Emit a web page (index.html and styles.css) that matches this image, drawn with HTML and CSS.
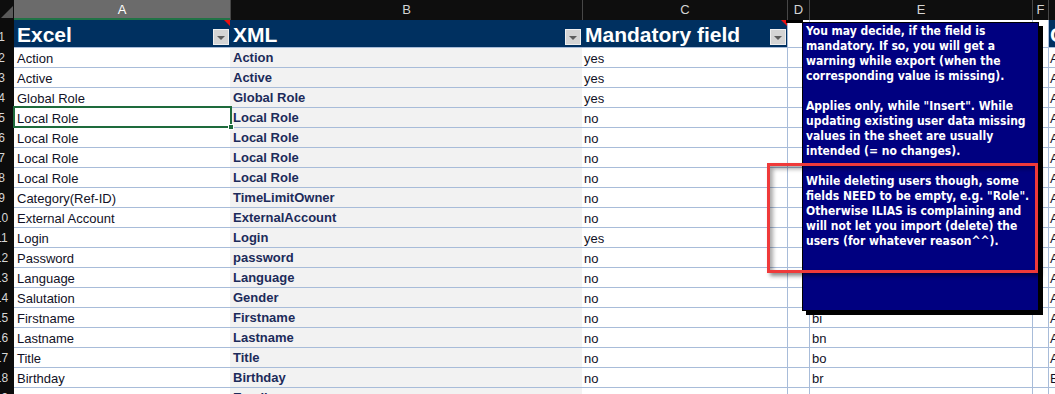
FILE: index.html
```html
<!DOCTYPE html>
<html>
<head>
<meta charset="utf-8">
<link rel="stylesheet" href="styles.css">
</head>
<body>
<div class="sheet">
  <div class="row colhead">
    <div class="corner"><svg width="14" height="20" viewBox="0 0 14 20"><polygon points="1,18 13,18 13,6" fill="#5a5a5a"/></svg></div>
    <div class="ch sel">A</div><div class="ch">B</div><div class="ch">C</div><div class="ch">D</div><div class="ch">E</div><div class="ch">F</div><div class="ch"></div>
  </div>
  <div class="row r1">
    <div class="rh"><span>1</span></div>
    <div class="c hd note"><span>Excel</span><i class="dd"></i></div>
    <div class="c hd"><span>XML</span><i class="dd"></i></div>
    <div class="c hd note"><span>Mandatory field</span><i class="dd"></i></div>
    <div class="c d"></div><div class="c e"></div><div class="c f"></div>
    <div class="c g hd"><span>C</span></div>
  </div>
  <div class="row"><div class="rh"><span>2</span></div><div class="c">Action</div><div class="c b">Action</div><div class="c cc">yes</div><div class="c d"></div><div class="c e"></div><div class="c f"></div><div class="c g">A</div></div>
  <div class="row"><div class="rh"><span>3</span></div><div class="c">Active</div><div class="c b">Active</div><div class="c cc">yes</div><div class="c d"></div><div class="c e"></div><div class="c f"></div><div class="c g">A</div></div>
  <div class="row"><div class="rh"><span>4</span></div><div class="c">Global Role</div><div class="c b">Global Role</div><div class="c cc">yes</div><div class="c d"></div><div class="c e"></div><div class="c f"></div><div class="c g">A</div></div>
  <div class="row"><div class="rh"><span>5</span></div><div class="c">Local Role</div><div class="c b">Local Role</div><div class="c cc">no</div><div class="c d"></div><div class="c e"></div><div class="c f"></div><div class="c g">A</div></div>
  <div class="row"><div class="rh"><span>6</span></div><div class="c">Local Role</div><div class="c b">Local Role</div><div class="c cc">no</div><div class="c d"></div><div class="c e"></div><div class="c f"></div><div class="c g">A</div></div>
  <div class="row"><div class="rh"><span>7</span></div><div class="c">Local Role</div><div class="c b">Local Role</div><div class="c cc">no</div><div class="c d"></div><div class="c e"></div><div class="c f"></div><div class="c g">A</div></div>
  <div class="row"><div class="rh"><span>8</span></div><div class="c">Local Role</div><div class="c b">Local Role</div><div class="c cc">no</div><div class="c d"></div><div class="c e"></div><div class="c f"></div><div class="c g">A</div></div>
  <div class="row"><div class="rh"><span>9</span></div><div class="c">Category(Ref-ID)</div><div class="c b">TimeLimitOwner</div><div class="c cc">no</div><div class="c d"></div><div class="c e"></div><div class="c f"></div><div class="c g">A</div></div>
  <div class="row"><div class="rh"><span>10</span></div><div class="c">External Account</div><div class="c b">ExternalAccount</div><div class="c cc">no</div><div class="c d"></div><div class="c e"></div><div class="c f"></div><div class="c g">A</div></div>
  <div class="row"><div class="rh"><span>11</span></div><div class="c">Login</div><div class="c b">Login</div><div class="c cc">yes</div><div class="c d"></div><div class="c e"></div><div class="c f"></div><div class="c g">A</div></div>
  <div class="row"><div class="rh"><span>12</span></div><div class="c">Password</div><div class="c b">password</div><div class="c cc">no</div><div class="c d"></div><div class="c e"></div><div class="c f"></div><div class="c g">A</div></div>
  <div class="row"><div class="rh"><span>13</span></div><div class="c">Language</div><div class="c b">Language</div><div class="c cc">no</div><div class="c d"></div><div class="c e"></div><div class="c f"></div><div class="c g">A</div></div>
  <div class="row"><div class="rh"><span>14</span></div><div class="c">Salutation</div><div class="c b">Gender</div><div class="c cc">no</div><div class="c d"></div><div class="c e"></div><div class="c f"></div><div class="c g">A</div></div>
  <div class="row"><div class="rh"><span>15</span></div><div class="c">Firstname</div><div class="c b">Firstname</div><div class="c cc">no</div><div class="c d"></div><div class="c e">bi</div><div class="c f"></div><div class="c g">A</div></div>
  <div class="row"><div class="rh"><span>16</span></div><div class="c">Lastname</div><div class="c b">Lastname</div><div class="c cc">no</div><div class="c d"></div><div class="c e">bn</div><div class="c f"></div><div class="c g">A</div></div>
  <div class="row"><div class="rh"><span>17</span></div><div class="c">Title</div><div class="c b">Title</div><div class="c cc">no</div><div class="c d"></div><div class="c e">bo</div><div class="c f"></div><div class="c g">A</div></div>
  <div class="row"><div class="rh"><span>18</span></div><div class="c">Birthday</div><div class="c b">Birthday</div><div class="c cc">no</div><div class="c d"></div><div class="c e">br</div><div class="c f"></div><div class="c g">B</div></div>
  <div class="row"><div class="rh"><span>19</span></div><div class="c">Email</div><div class="c b">Email</div><div class="c cc">no</div><div class="c d"></div><div class="c e">bs</div><div class="c f"></div><div class="c g">T</div></div>

  <div class="selection"><i class="handle"></i></div>
  <div class="connector"></div>
  <div class="comment">You may decide, if the field is<br>mandatory. If so, you will get a<br>warning while export (when the<br>corresponding value is missing).<br><br>Applies only, while "Insert". While<br>updating existing user data missing<br>values in the sheet are usually<br>intended (= no changes).<br><br>While deleting users though, some<br>fields NEED to be empty, e.g. "Role".<br>Otherwise ILIAS is complaining and<br>will not let you import (delete) the<br>users (for whatever reason^^).</div>
  <div class="mark"></div>
</div>
</body>
</html>
```
FILE: styles.css
```css
* { box-sizing: border-box; }
html, body { margin: 0; background: #fff; overflow: hidden; }
body { font-family: "Liberation Sans", Arial, sans-serif; font-size: 13px; }

.sheet { position: relative; width: 1055px; height: 394px; overflow: hidden; }

.row {
  display: grid;
  grid-template-columns: 14px 216px 352px 205px 22px 223px 16px 1fr;
  height: 20px;
}

.colhead { background: #0e0e0e; }
.corner { display: flex; }
.ch {
  color: #d4d4d4;
  text-align: center;
  line-height: 19px;
  font-size: 13px;
  border-left: 1px solid #474747;
}
.ch.sel {
  background: #6b6b6b;
  color: #fff;
  border-left: 0;
  box-shadow: inset 0 -2px 0 #217346;
}

.rh {
  background: #0c0c0c;
  color: #d6d6d6;
  font-size: 12px;
  line-height: 19px;
  padding-top: 1px;
  overflow: hidden;
  white-space: nowrap;
}
.rh span { display: inline-block; width: 23px; margin-left: -10px; text-align: center; }

.c {
  border-bottom: 1px solid #a8bcd9;
  line-height: 19px;
  padding: 1px 0 0 3px;
  white-space: nowrap;
  overflow: hidden;
  color: #111126;
}
.b { background: #f2f2f2; font-weight: bold; color: #1c2b5a; padding-top: 0; }
.cc { padding-left: 2px; }
.d, .e, .f, .g { border-left: 1px solid #a8bcd9; }
.e { padding-left: 2px; }
.g { padding-left: 1px; }

.r1 { height: 28px; }
.r1 .rh { padding-top: 8px; }
.hd {
  position: relative;
  background: #003060;
  color: #fff;
  font-weight: bold;
  font-size: 21px;
  line-height: 24px;
  display: flex;
  align-items: flex-end;
  justify-content: space-between;
  padding: 0 0 0 3px;
}
.g.hd { padding-left: 1px; }
.note::before {
  content: "";
  position: absolute;
  top: 0;
  right: 0;
  border-top: 6px solid #e81010;
  border-left: 6px solid transparent;
}
.dd {
  flex: none;
  width: 16px;
  height: 16px;
  margin: 0 1px 2px 0;
  background: #d4d4d4;
  border: 1px solid #efefef;
  display: flex;
  align-items: center;
  justify-content: center;
}
.dd::after {
  content: "";
  margin-top: 2px;
  border-left: 4px solid transparent;
  border-right: 4px solid transparent;
  border-top: 4px solid #5c5c5c;
}

.selection {
  position: absolute;
  left: 13px;
  top: 106px;
  width: 219px;
  height: 22px;
  border: 2px solid #1e6b3c;
}
.handle {
  position: absolute;
  right: -4px;
  bottom: -4px;
  width: 6px;
  height: 6px;
  background: #1e6b3c;
  border: 1px solid #fff;
}

.connector {
  position: absolute;
  left: 786px;
  top: 20px;
  width: 17px;
  height: 3px;
  background: #000;
}

.comment {
  position: absolute;
  left: 802px;
  top: 22px;
  width: 237px;
  height: 289px;
  background: #000080;
  border: 1px solid #000;
  box-shadow: 4px 4px 0 #000;
  color: #fff;
  font-family: "DejaVu Sans Condensed", "DejaVu Sans", sans-serif;
  font-stretch: condensed;
  font-weight: bold;
  font-size: 12px;
  line-height: 15px;
  padding: 1px 3px;
  white-space: nowrap;
}

.mark {
  position: absolute;
  left: 767px;
  top: 163px;
  width: 271px;
  height: 110px;
  border: 3px solid #ef3a3a;
  box-shadow: 3px 3px 4px rgba(0,0,0,0.45), inset 3px 3px 4px rgba(0,0,0,0.35);
}
```
